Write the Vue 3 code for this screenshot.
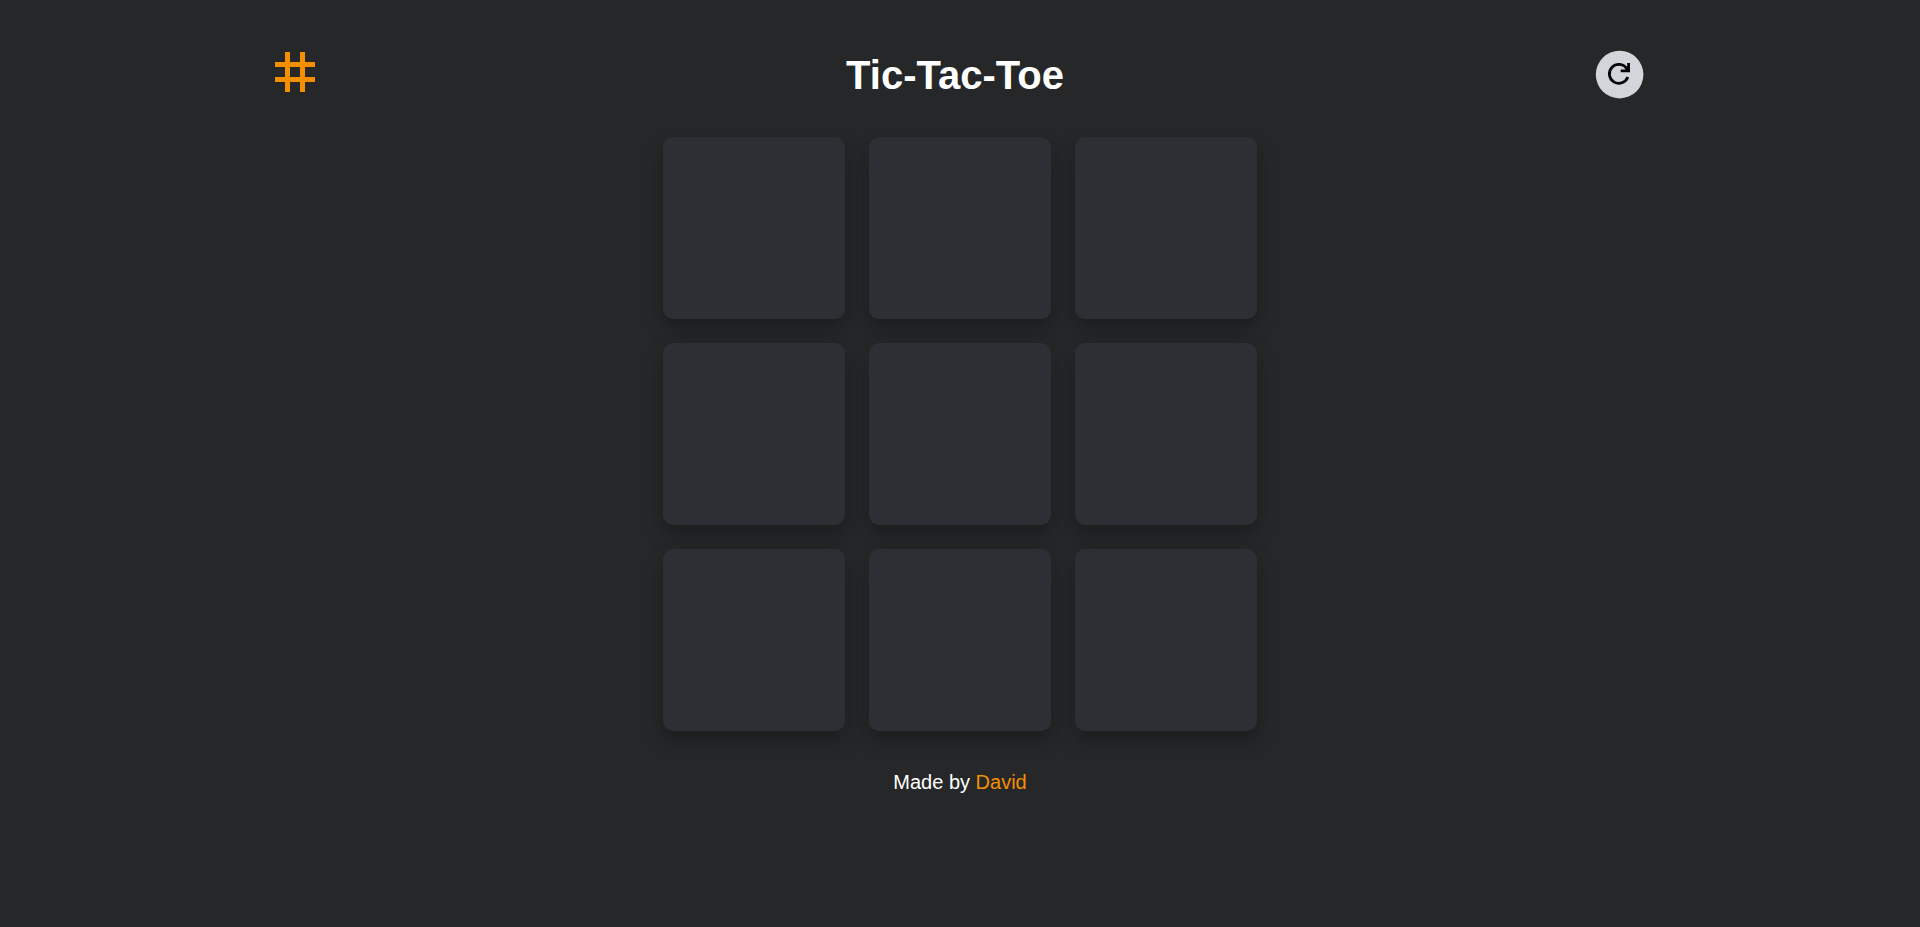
<script setup>
import { ref } from 'vue'

const cells = ref(Array(9).fill(''))
const turn = ref('X')

function play(index) {
  if (cells.value[index]) return
  cells.value[index] = turn.value
  turn.value = turn.value === 'X' ? 'O' : 'X'
}

function restart() {
  cells.value = Array(9).fill('')
  turn.value = 'X'
}
</script>

<template>
  <div class="page">
    <header class="header">
      <div class="logo">
        <svg width="40" height="40" viewBox="0 0 40 40" fill="#f58f00" aria-hidden="true">
          <path d="M10 0h5v10h10V0h5v10h10v5H30v10h10v5H30v10h-5V30H15v10h-5V30H0v-5h10V15H0v-5h10zM15 15v10h10V15z" />
        </svg>
      </div>
      <h1 class="title">Tic-Tac-Toe</h1>
      <button class="restart" type="button" aria-label="Restart" @click="restart">
        <svg width="50" height="50" viewBox="0 0 50 50" aria-hidden="true">
          <circle cx="24.6" cy="24.6" r="23.8" fill="#d4d5db" />
          <path d="M31.8 18.6A9.5 9.5 0 1 0 32.8 27" fill="none" stroke="#050505" stroke-width="2.8" />
          <path d="M35 13v9.3h-9.3v-2.8h5.2l-1.2-1.8L32.2 16V13z" fill="#050505" />
        </svg>
      </button>
    </header>
    <main class="board">
      <button
        v-for="(mark, index) in cells"
        :key="index"
        class="cell"
        type="button"
        :aria-label="`Cell ${index + 1}`"
        @click="play(index)"
      >{{ mark }}</button>
    </main>
    <footer class="footer">Made by <a class="author" href="#">David</a></footer>
  </div>
</template>

<style>
body {
  margin: 0;
  background: #252728;
}
</style>

<style scoped>
.page {
  box-sizing: border-box;
  min-height: 100vh;
  padding-top: 50px;
  background: #252728;
  color: #fff;
  font-family: Arial, "Liberation Sans", sans-serif;
}

.header {
  display: flex;
  align-items: center;
  justify-content: space-between;
  max-width: 1370px;
  margin: 0 auto 37px;
}

.logo {
  height: 46px;
}

.logo svg {
  display: block;
}

.title {
  margin: 0;
  font-size: 40px;
  line-height: 46px;
}

.restart {
  padding: 0;
  border: 0;
  background: none;
  cursor: pointer;
}

.restart svg {
  display: block;
}

.board {
  display: grid;
  grid-template-columns: repeat(3, 1fr);
  gap: 24px;
  max-width: 594px;
  margin: 0 auto;
}

.cell {
  aspect-ratio: 1;
  padding: 0;
  border: 0;
  border-radius: 10px;
  background: #2c2f34;
  box-shadow: 0 10px 20px rgba(0, 0, 0, 0.27);
  color: #f58f00;
  font: bold 96px Arial, "Liberation Sans", sans-serif;
  cursor: pointer;
}

.footer {
  margin-top: 40px;
  font-size: 20px;
  line-height: 23px;
  text-align: center;
}

.author {
  color: #f58f00;
  text-decoration: none;
}
</style>
